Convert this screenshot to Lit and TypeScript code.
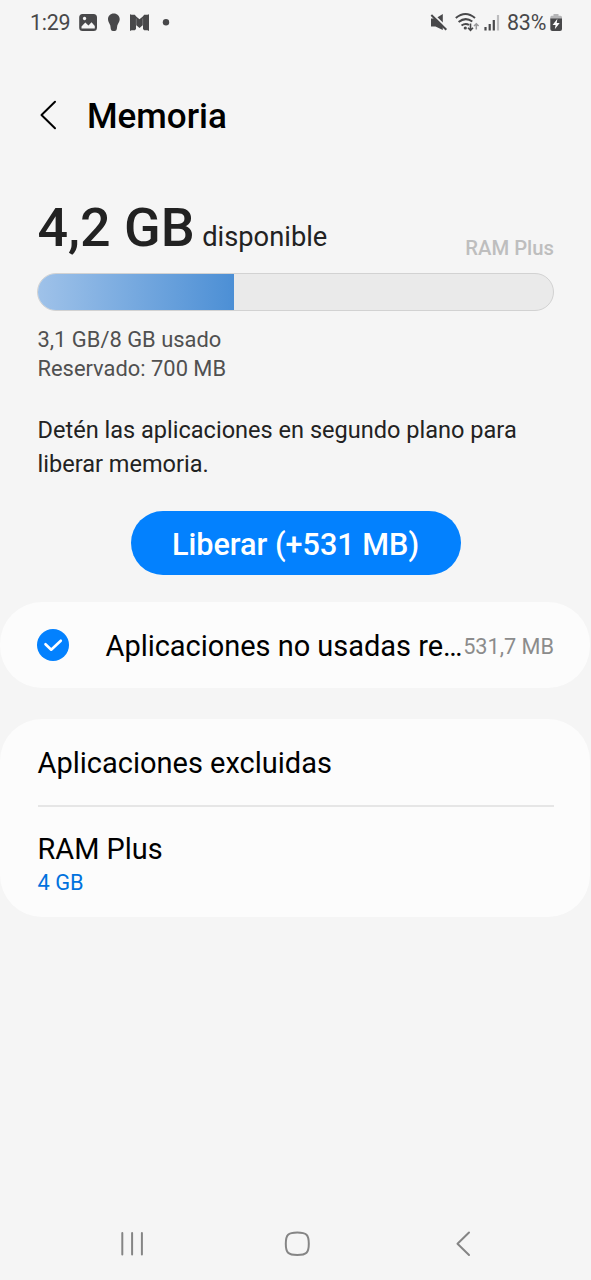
import { LitElement, html, css } from "lit";
import { customElement, property } from "lit/decorators.js";

@customElement("status-bar")
class StatusBar extends LitElement {
  static styles = css`
    :host { display: flex; justify-content: space-between; height: 45px; padding: 0 28px 0 30px; color: #48484a; }
    .group { display: flex; align-items: center; height: 45px; }
    .label { font-size: 21.4px; line-height: 45px; white-space: nowrap; }
    .time { width: 49px; letter-spacing: -0.2px; }
    .percent { width: 43px; letter-spacing: -0.2px; }
    svg { display: block; }
  `;
  render() {
    return html`
      <div class="group">
        <span class="label time">1:29</span>
        <svg width="94" height="45" viewBox="79 0 94 45" fill="currentColor">
          <path fill-rule="evenodd" d="M82.500 14H93.500Q97 14 97 17.500V27.500Q97 31 93.500 31H82.500Q79.200 31 79.200 27.500V17.500Q79.200 14 82.500 14ZM81.500 26.500V28.500H94.800V26L91.500 22.300L88.500 25.500L85.300 22.600ZM84.500 16.800A1.700 1.700 0 1 0 84.600 16.800Z"/>
          <path d="M113.800 13.500C117.300 13.500 119.700 16 119.700 19.200C119.700 21.800 118 23.500 117.300 25.500L116.800 29Q116.500 31 114.800 31H112.800Q111.100 31 110.800 29L110.300 25.500C109.600 23.500 108 21.800 108 19.200C108 16 110.300 13.500 113.800 13.500Z"/>
          <path d="M130 14.200L131.500 14.800H134.800L136.200 16.500L139.500 19.300L142.800 16.500L144.200 14.800H147.500L149 14.200V31L147.500 30.200H144.200L143 29V25L139.500 28L136 25V29L134.800 30.200H131.500L130 31Z"/>
          <path d="M136.300 18.500V25M142.700 18.500V25" stroke="#8a8a8c" stroke-width="0.700"/>
          <circle cx="166" cy="22.300" r="3.200"/>
        </svg>
      </div>
      <div class="group">
        <svg width="77" height="45" viewBox="430 0 77 45" fill="none" stroke="currentColor">
          <path d="M431 18.500H435.500L442.800 14V30L435.500 26.500H431Z" fill="currentColor" stroke="none"/>
          <path d="M432.500 13.800L448 29" stroke="#f5f5f5" stroke-width="2"/>
          <path d="M431.300 15L446.300 29.800" stroke-width="2"/>
          <path d="M455.800 18Q465.500 10 475 18M458.600 22Q465.500 16.500 472.300 21.500M461.500 25.500Q465.500 22.600 469 25" stroke-width="2"/>
          <circle cx="465.300" cy="28" r="1.600" fill="currentColor" stroke="none"/>
          <path d="M470.500 23.500V30M468 27.800L470.500 30.300L473 27.800" stroke-width="1.600"/>
          <path d="M476.300 29.500V24.500M474 26L476.300 23.700L478.600 26" stroke="#98989a" stroke-width="1.500"/>
          <path d="M485.500 27V30.500M489.700 24V30.500M493.800 20V30.500" stroke-width="2.200"/>
          <path d="M498 15V30.500" stroke="#bcbcbe" stroke-width="2.200"/>
        </svg>
        <span class="label percent">83%</span>
        <svg width="13" height="45" viewBox="550 0 13 45">
          <path d="M553.500 14H558.500V15.700H560.500Q562 15.700 562 17.200V19.500H550.300V17.200Q550.300 15.700 551.500 15.700H553.500Z" fill="#b5b5b7"/>
          <path d="M550.300 18.500H562V29Q562 31 560 31H552.300Q550.300 31 550.300 29Z" fill="#48484a"/>
          <path d="M557.400 18.800L552.600 24.900H555.600L554.800 29.200L559.700 23H556.700Z" fill="#fff"/>
        </svg>
      </div>`;
  }
}

@customElement("memory-summary")
class MemorySummary extends LitElement {
  @property({ type: Number }) used = 38;
  static styles = css`
    :host { display: block; padding: 0 37px 0 37.500px; }
    .headline { display: flex; justify-content: space-between; height: 68px; color: #222; }
    .available { line-height: 68px; white-space: nowrap; }
    .amount { font-size: 53.800px; font-weight: 500; }
    .unit { font-size: 27.300px; margin-left: 7.500px; }
    .plus { align-self: flex-end; font-size: 20.300px; font-weight: 500; line-height: 28px; color: #bebebe; }
    .track { box-sizing: border-box; height: 38px; margin: 11px 0 0 -0.500px; border: 1px solid #d2d2d2; border-radius: 19px; background: #eaeaea; overflow: hidden; }
    .fill { height: 36px; background: linear-gradient(90deg, #9fc2e9, #4c8fd5); }
    .details { margin-top: 13.500px; font-size: 21.900px; line-height: 29.500px; color: #505050; }
    .hint { margin-top: 29.500px; font-size: 23.560px; line-height: 34px; color: #222; white-space: nowrap; }
    .release { display: block; width: 330px; height: 64px; margin: 30px 0 0 93px; padding: 3px 0 0; border: 0; border-radius: 32px; background: #0381fe; color: #fff; font: 500 30.600px/61px Roboto, sans-serif; white-space: nowrap; }
  `;
  render() {
    return html`
      <div class="headline">
        <div class="available"><span class="amount">4,2 GB</span><span class="unit">disponible</span></div>
        <span class="plus">RAM Plus</span>
      </div>
      <div class="track"><div class="fill" style="width:${this.used}%"></div></div>
      <div class="details">3,1 GB/8 GB usado<br />Reservado: 700 MB</div>
      <div class="hint">Detén las aplicaciones en segundo plano para<br />liberar memoria.</div>
      <button class="release">Liberar (+531 MB)</button>`;
  }
}

@customElement("app-root")
class AppRoot extends LitElement {
  static styles = css`
    :host { display: flex; flex-direction: column; height: 1280px; background: #f5f5f5; font-family: Roboto, sans-serif; overflow: hidden; }
    svg { display: block; flex: none; }
    .header { display: flex; align-items: center; height: 142px; margin-bottom: 7px; padding-left: 39px; }
    .title { margin: 0 0 0 28px; padding-top: 2px; font-size: 35px; font-weight: 500; line-height: 42px; color: #000; }
    .card { box-sizing: border-box; margin: 0 1px 0 0; border-radius: 42px; background: #fcfcfc; color: #000; font-size: 29px; }
    .unused { display: flex; align-items: center; height: 86px; margin-top: 27px; padding: 0 36px 0 37px; }
    .name { margin-left: 36.500px; white-space: nowrap; line-height: 40px; padding-top: 2px; letter-spacing: -0.03px; }
    .size { margin-left: auto; font-size: 21.700px; color: #8c8c8c; line-height: 30px; padding-top: 3px; white-space: nowrap; }
    .options { height: 198.500px; margin-top: 30.500px; padding: 0 36px 0 37.500px; }
    .excluded { height: 86px; line-height: 89px; border-bottom: 2px solid #e6e6e6; }
    .ram { padding-top: 23px; line-height: 38px; font-size: 28.900px; }
    .value { font-size: 21.800px; line-height: 30px; color: #0072de; }
    .nav { margin-top: auto; height: 72px; }
  `;
  render() {
    return html`
      <status-bar></status-bar>
      <header class="header">
        <svg width="20" height="32" viewBox="0 0 20 32" fill="none" stroke="#000" stroke-width="2" stroke-linecap="round" stroke-linejoin="round"><path d="M16 1.800L2.500 15L16 28.200"/></svg>
        <h1 class="title">Memoria</h1>
      </header>
      <memory-summary></memory-summary>
      <section class="card unused">
        <svg width="32" height="32" viewBox="0 0 32 32"><circle cx="16" cy="16" r="16" fill="#0381fe"/><path d="M8.500 15.200L14.200 20.700L23.800 11.700" fill="none" stroke="#fff" stroke-width="2.600" stroke-linecap="round" stroke-linejoin="round"/></svg>
        <span class="name">Aplicaciones no usadas re…</span>
        <span class="size">531,7 MB</span>
      </section>
      <section class="card options">
        <div class="excluded">Aplicaciones excluidas</div>
        <div class="ram">RAM Plus</div>
        <div class="value">4 GB</div>
      </section>
      <nav class="nav">
        <svg width="591" height="72" viewBox="0 1208 591 72" fill="none" stroke="#858585" stroke-width="2" stroke-linecap="round" stroke-linejoin="round">
          <path d="M122.300 1233V1254.500M132.100 1233V1254.500M141.900 1233V1254.500"/>
          <path d="M297.300 1232.500C306.500 1232.500 308.800 1234.800 308.800 1243.800C308.800 1252.800 306.500 1255 297.300 1255C288.100 1255 285.800 1252.800 285.800 1243.800C285.800 1234.800 288.100 1232.500 297.300 1232.500Z"/>
          <path d="M469 1232.500L457.500 1243.800L469 1255"/>
        </svg>
      </nav>`;
  }
}
